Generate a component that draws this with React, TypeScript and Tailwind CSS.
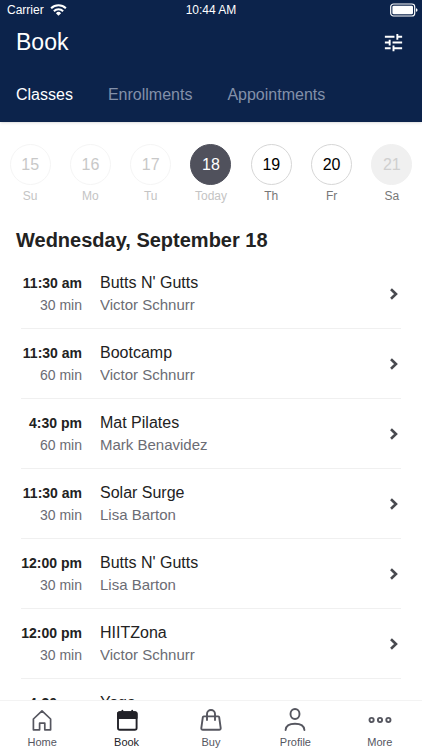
import { useState } from "react"
import type { ReactNode } from "react"
import { clsx } from "clsx"
import { MdTune } from "react-icons/md"

interface Day {
  date: number
  label: string
  status: "past" | "open" | "closed"
}

interface ClassItem {
  time: string
  duration: string
  name: string
  instructor: string
}

const tabs = ["Classes", "Enrollments", "Appointments"]

const days: Day[] = [
  { date: 15, label: "Su", status: "past" },
  { date: 16, label: "Mo", status: "past" },
  { date: 17, label: "Tu", status: "past" },
  { date: 18, label: "Today", status: "open" },
  { date: 19, label: "Th", status: "open" },
  { date: 20, label: "Fr", status: "open" },
  { date: 21, label: "Sa", status: "closed" },
]

const classes: ClassItem[] = [
  { time: "11:30 am", duration: "30 min", name: "Butts N' Gutts", instructor: "Victor Schnurr" },
  { time: "11:30 am", duration: "60 min", name: "Bootcamp", instructor: "Victor Schnurr" },
  { time: "4:30 pm", duration: "60 min", name: "Mat Pilates", instructor: "Mark Benavidez" },
  { time: "11:30 am", duration: "30 min", name: "Solar Surge", instructor: "Lisa Barton" },
  { time: "12:00 pm", duration: "30 min", name: "Butts N' Gutts", instructor: "Lisa Barton" },
  { time: "12:00 pm", duration: "30 min", name: "HIITZona", instructor: "Victor Schnurr" },
  { time: "4:30 pm", duration: "", name: "Yoga", instructor: "" },
]

const NavIcon = ({ children }: { children: ReactNode }) => (
  <svg
    viewBox="0 0 24 24"
    className="h-6 w-6"
    fill="none"
    stroke="currentColor"
    strokeWidth="1.9"
    strokeLinecap="round"
    strokeLinejoin="round"
    aria-hidden="true"
  >
    {children}
  </svg>
)

const navItems = [
  {
    label: "Home",
    icon: (
      <NavIcon>
        <path d="M3.400 11 12 2.800l8.600 8.200v10.800h-5.800v-6.600H9.600v6.600H3.400z" strokeWidth="1.700" />
      </NavIcon>
    ),
  },
  {
    label: "Book",
    icon: (
      <NavIcon>
        <rect x="3" y="4.200" width="18.600" height="17.600" rx="1.800" />
        <path d="M3 10V6a1.800 1.800 0 0 1 1.800-1.800h15A1.800 1.800 0 0 1 21.600 6v4z" fill="currentColor" />
        <path d="M7.400 2.700v2M17.200 2.700v2" />
      </NavIcon>
    ),
  },
  {
    label: "Buy",
    icon: (
      <NavIcon>
        <path d="M4.800 8.400h14.400a1 1 0 0 1 1 .9l1.500 10.800a1.500 1.500 0 0 1-1.500 1.700H3.800a1.500 1.500 0 0 1-1.500-1.700L3.800 9.300a1 1 0 0 1 1-.9z" />
        <path d="M8 12V6a4 4 0 0 1 8 0v6" />
      </NavIcon>
    ),
  },
  {
    label: "Profile",
    icon: (
      <NavIcon>
        <ellipse cx="12" cy="6" rx="4.500" ry="5" />
        <path d="M2.600 22c.3-4 3.600-6.200 9.400-6.200s9.100 2.200 9.400 6.200" />
      </NavIcon>
    ),
  },
  {
    label: "More",
    icon: (
      <NavIcon>
        <circle cx="3.600" cy="12" r="2.100" />
        <circle cx="12" cy="12" r="2.100" />
        <circle cx="20.400" cy="12" r="2.100" />
      </NavIcon>
    ),
  },
]

const StatusBar = () => (
  <div className="grid h-5 grid-cols-3 items-center px-1 text-xs">
    <div className="flex items-center gap-1.5 pl-[3px]">
      <span>Carrier</span>
      <svg viewBox="0 0 18 13" className="h-3 w-[17px]" fill="none" stroke="currentColor" aria-hidden="true">
        <path d="M1 4.600a11.400 11.400 0 0 1 16 0" strokeWidth="2.200" />
        <path d="M4 7.800a7.200 7.200 0 0 1 10 0" strokeWidth="2.200" />
        <path d="M9 12.600 6.200 9.900a4 4 0 0 1 5.600 0z" fill="currentColor" stroke="none" />
      </svg>
    </div>
    <span className="text-center">10:44 AM</span>
    <svg viewBox="0 0 28 14" className="h-3.5 w-7 justify-self-end" aria-hidden="true">
      <rect x="0.700" y="1" width="24" height="12" rx="2.800" fill="none" stroke="currentColor" strokeWidth="1.200" />
      <rect x="2.400" y="2.700" width="20.600" height="8.600" rx="1.400" fill="currentColor" />
      <path d="M26 5.200c2 .5 2 3.100 0 3.600z" fill="currentColor" />
    </svg>
  </div>
)

const DayButton = ({ day, selected, onSelect }: { day: Day; selected: boolean; onSelect: () => void }) => (
  <button
    type="button"
    disabled={day.status !== "open"}
    aria-pressed={selected}
    onClick={onSelect}
    className="flex flex-col items-center gap-0.5"
  >
    <span
      className={clsx(
        "flex h-[41px] w-[41px] items-center justify-center rounded-full border text-base",
        selected && "border-[#50515c] bg-[#50515c] text-white",
        !selected && day.status === "open" && "border-[#d6d6d6] text-black",
        day.status === "past" && "border-[#f5f5f5] text-[#c8c8c8]",
        day.status === "closed" && "border-[#f0f0f0] bg-[#f0f0f0] text-[#cfcfcf]",
      )}
    >
      {day.date}
    </span>
    <span
      className={clsx(
        "text-xs leading-[18px]",
        selected || day.status === "past" ? "text-[#c4c4c4]" : "text-[#777777]",
      )}
    >
      {day.label}
    </span>
  </button>
)

const ClassRow = ({ item }: { item: ClassItem }) => (
  <li className="border-b border-[#f0f0f0]">
    <a href="#" className="flex h-[69px] items-center gap-[18px]">
      <div className="w-[61px] shrink-0 text-right text-sm leading-[22px] text-[#6b6c74]">
        <p className="font-bold text-[#222222]">{item.time}</p>
        <p className="h-[22px]">{item.duration}</p>
      </div>
      <div className="min-w-0 flex-1 text-[15px] leading-[22px] text-[#6b6c74]">
        <p className="truncate text-base leading-[22px] text-[#222222]">{item.name}</p>
        <p className="h-[22px] truncate">{item.instructor}</p>
      </div>
      <svg
        viewBox="0 0 12 14"
        className="h-3.5 w-3 shrink-0"
        fill="none"
        stroke="#48494f"
        strokeWidth="2.600"
        aria-hidden="true"
      >
        <path d="m2 2.200 5 4.800-5 4.800" />
      </svg>
    </a>
  </li>
)

const App = () => {
  const [activeTab, setActiveTab] = useState("Classes")
  const [selectedDate, setSelectedDate] = useState(18)

  return (
    <div className="flex h-screen flex-col overflow-hidden bg-white font-['Liberation_Sans',Arial,sans-serif] text-[#222222]">
      <header className="shrink-0 bg-[#0c234b] text-white shadow-sm">
        <StatusBar />
        <div className="flex h-11 items-center justify-between pr-[17px] pl-4">
          <h1 className="text-[23px] leading-7">Book</h1>
          <button type="button" aria-label="Filters">
            <MdTune size={23} />
          </button>
        </div>
        <nav className="flex h-[58px] items-center gap-[35px] px-4 pt-1">
          {tabs.map((tab) => (
            <button
              key={tab}
              type="button"
              onClick={() => setActiveTab(tab)}
              className={clsx("text-base", tab === activeTab ? "text-white" : "text-[#8390a9]")}
            >
              {tab}
            </button>
          ))}
        </nav>
      </header>

      <main className="min-h-0 flex-1 overflow-hidden">
        <div className="grid grid-cols-7 pt-[22px]">
          {days.map((day) => (
            <DayButton
              key={day.date}
              day={day}
              selected={day.date === selectedDate}
              onSelect={() => setSelectedDate(day.date)}
            />
          ))}
        </div>

        <h2 className="px-4 pt-[21px] pb-[5px] text-xl font-bold">Wednesday, September 18</h2>

        <ul className="px-[21px]">
          {classes.map((item, index) => (
            <ClassRow key={index} item={item} />
          ))}
        </ul>
      </main>

      <nav className="grid h-[50px] shrink-0 grid-cols-5 border-t border-[#f3f3f3] bg-white">
        {navItems.map((item) => (
          <a
            key={item.label}
            href="#"
            className={clsx(
              "flex flex-col items-center gap-0.5 pt-[7px] text-[11px] leading-4",
              item.label === "Book" ? "text-[#222228]" : "text-[#55565f]",
            )}
          >
            {item.icon}
            <span>{item.label}</span>
          </a>
        ))}
      </nav>
    </div>
  )
}

export default App
